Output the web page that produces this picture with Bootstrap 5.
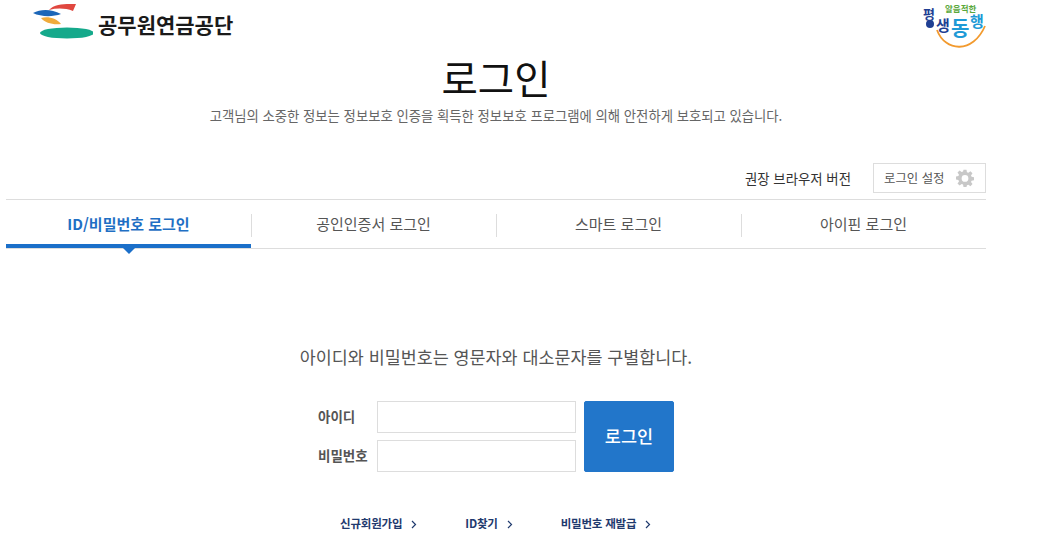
<!DOCTYPE html>
<html lang="ko">
<head>
<meta charset="utf-8">
<title>로그인</title>
<link href="https://cdn.jsdelivr.net/npm/bootstrap@5.3.0/dist/css/bootstrap.min.css" rel="stylesheet">
<style>
html,body{height:540px;overflow:hidden}
body{font-family:"Noto Sans CJK KR","Noto Sans",sans-serif;color:#444;background:#fff}
.shell{width:980px;margin-left:6px}
.top-bar{height:50px}
.logo-wrap{margin-left:27px;height:40px}
.logo-name{font-size:21px;font-weight:700;color:#1a1a1a;letter-spacing:0;line-height:1;margin-left:5px;margin-top:14px}
.brand-mark{margin-right:-1px}
.page-title{font-size:39.500px;font-weight:400;color:#111;line-height:52px;margin:0;padding-top:1px}
.page-sub{font-size:13.350px;color:#666;line-height:20px;margin:3px 0 0}
.tool-row{margin-top:37px;height:30px}
.browser-link{font-size:13.400px;color:#333;margin-right:22px}
.setting-box{width:113px;height:30px;border:1px solid #ddd;font-size:12.400px;color:#555;padding:0 11px 0 10px}
.tab-strip{margin-top:6px;border-top:1px solid #ddd;border-bottom:1px solid #ddd;height:50px}
.tab-cell{width:245px;height:48px;font-size:15px;color:#555;position:relative}
.tab-cell+.tab-cell::before{content:"";position:absolute;left:0;top:14px;height:23px;width:1px;background:#ddd}
.tab-on{color:#1f6fc4;font-weight:700;border-bottom:4px solid #1b6fc9;padding-top:4px}
.tab-on::after{content:"";position:absolute;left:50%;margin-left:-6px;bottom:-10px;border:6px solid transparent;border-bottom:0;border-top-color:#1b6fc9}
.notice{font-size:17.400px;color:#555;line-height:24px;margin:96px 0 0}
.login-form{margin:32px 0 0 312px;width:356px;gap:8px}
.field-row{height:32px}
.field-label{width:59px;font-size:13.500px;font-weight:700;color:#555;padding-bottom:2px}
.field-box{width:199px;height:32px;border:1px solid #ddd;border-radius:0;padding:0 8px}
.field-stack{gap:7px}
.login-btn{width:90px;height:71px;background:#2276ca;border-color:#2276ca;color:#fff;font-size:17.500px;font-weight:500;border-radius:2px;padding:0}
.link-row{margin:43px 0 0 334px;gap:48px}
.link-row a{font-size:11.500px;font-weight:700;color:#1f3a6e;text-decoration:none;letter-spacing:-.2px}
.link-row svg{margin-left:9px}
</style>
</head>
<body>
<div class="shell">
  <header class="top-bar d-flex justify-content-between">
    <div class="logo-wrap d-flex align-items-start">
      <svg width="60" height="40" viewBox="0 0 60 40">
        <path d="M16 10 C22 3 34 4 43 4 L40 11 C32 8 24 8 16 10Z" fill="#e0473f"/>
        <path d="M0 13 C8 9 18 9 28 14 C20 17 8 17 0 13Z" fill="#1c66b8"/>
        <path d="M8 18 C16 16 24 19 28 24 C20 25 12 23 8 18Z" fill="#f0ab3c"/>
        <ellipse cx="34" cy="33" rx="27" ry="5.500" fill="#15a98b"/>
      </svg>
      <span class="logo-name">공무원연금공단</span>
    </div>
    <svg class="brand-mark" width="64" height="50" viewBox="0 0 64 50">
      <path d="M14 30 C22 52 50 54 62 26" fill="none" stroke="#f29a2e" stroke-width="1.800"/>
      <text x="22" y="12" font-size="8.500" font-weight="700" fill="#5aa83c" font-family="Noto Sans CJK KR">알음적한</text>
      <text x="0" y="19" font-size="13" font-weight="700" fill="#1f3f93" font-family="Noto Sans CJK KR">평</text>
      <circle cx="7" cy="24" r="4" fill="#1f3f93"/>
      <text x="13" y="31" font-size="15" font-weight="700" fill="#1f3f93" font-family="Noto Sans CJK KR">생</text>
      <text x="28" y="36" font-size="20" font-weight="700" fill="#1e9ad6" font-family="Noto Sans CJK KR">동</text>
      <text x="47" y="27" font-size="15" font-weight="700" fill="#1e9ad6" font-family="Noto Sans CJK KR">행</text>
    </svg>
  </header>

  <div class="text-center">
    <h1 class="page-title">로그인</h1>
    <p class="page-sub">고객님의 소중한 정보는 정보보호 인증을 획득한 정보보호 프로그램에 의해 안전하게 보호되고 있습니다.</p>
  </div>

  <div class="tool-row d-flex justify-content-end align-items-center">
    <span class="browser-link">권장 브라우저 버전</span>
    <div class="setting-box d-flex justify-content-between align-items-center">
      <span>로그인 설정</span>
      <svg width="18" height="18" viewBox="0 0 24 24"><path fill="#c8c8c8" fill-rule="evenodd" d="M10 1h4l.6 3.200 1.900.8L19.200 3l2.800 2.800-2 2.700.8 1.900L24 11v4l-3.200.5-.8 1.900 2 2.700-2.800 2.800-2.700-1.900-1.900.8L14 24h-4l-.6-3.200-1.900-.8L4.800 22 2 19.200l2-2.700-.8-1.900L0 14v-4l3.200-.6.8-1.900L2 4.800 4.800 2l2.700 2 1.900-.8ZM12 8a4.500 4.500 0 1 0 0 9 4.500 4.500 0 0 0 0-9Z"/></svg>
    </div>
  </div>

  <nav class="tab-strip d-flex">
    <div class="tab-cell tab-on d-flex justify-content-center align-items-center">ID/비밀번호 로그인</div>
    <div class="tab-cell d-flex justify-content-center align-items-center">공인인증서 로그인</div>
    <div class="tab-cell d-flex justify-content-center align-items-center">스마트 로그인</div>
    <div class="tab-cell d-flex justify-content-center align-items-center">아이핀 로그인</div>
  </nav>

  <p class="notice text-center">아이디와 비밀번호는 영문자와 대소문자를 구별합니다.</p>

  <form class="login-form d-flex">
    <div class="field-stack d-flex flex-column">
      <div class="field-row d-flex align-items-center"><label class="field-label">아이디</label><input class="field-box form-control" type="text"></div>
      <div class="field-row d-flex align-items-center"><label class="field-label">비밀번호</label><input class="field-box form-control" type="password"></div>
    </div>
    <button type="button" class="btn login-btn">로그인</button>
  </form>

  <div class="link-row d-flex">
    <a href="#">신규회원가입<svg width="6" height="9" viewBox="0 0 6 9"><path d="M1 1l3.500 3.500L1 8" fill="none" stroke="#1f3a6e" stroke-width="1.200"/></svg></a>
    <a href="#">ID찾기<svg width="6" height="9" viewBox="0 0 6 9"><path d="M1 1l3.500 3.500L1 8" fill="none" stroke="#1f3a6e" stroke-width="1.200"/></svg></a>
    <a href="#">비밀번호 재발급<svg width="6" height="9" viewBox="0 0 6 9"><path d="M1 1l3.500 3.500L1 8" fill="none" stroke="#1f3a6e" stroke-width="1.200"/></svg></a>
  </div>
</div>
<script src="https://cdn.jsdelivr.net/npm/bootstrap@5.3.0/dist/js/bootstrap.bundle.min.js"></script>
</body>
</html>
